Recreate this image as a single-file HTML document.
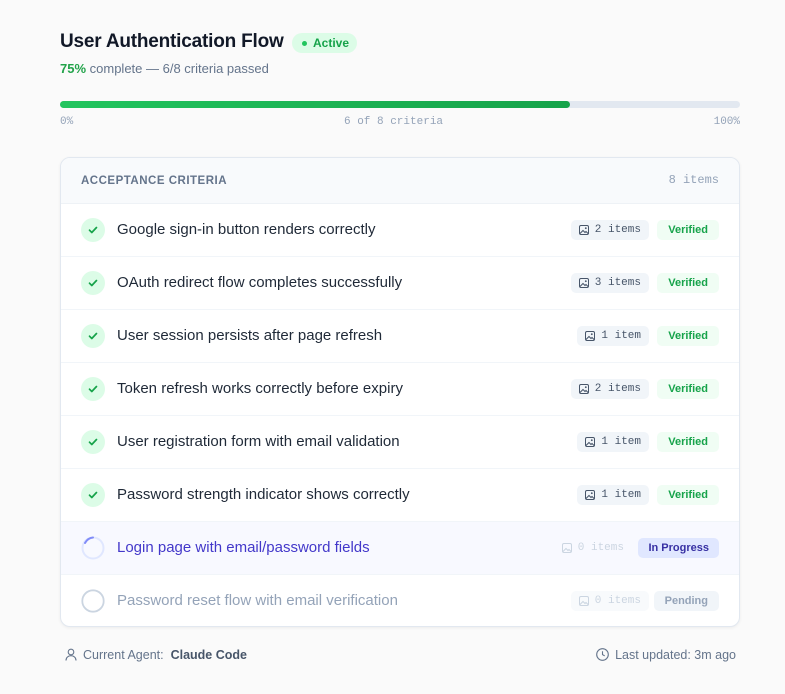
<!DOCTYPE html>
<html><head><meta charset="utf-8"><style>
*{box-sizing:border-box;margin:0;padding:0}
body{width:785px;height:694px;background:#fafafa;font-family:"Liberation Sans",sans-serif;position:relative;overflow:hidden}
.mono{font-family:"Liberation Mono",monospace}
h1{position:absolute;left:60px;top:31px;font-size:19px;font-weight:700;color:#111827;letter-spacing:-0.2px}
.active{position:absolute;left:292px;top:33px;height:20px;width:65px;border-radius:10px;background:#dcfce7;color:#16a34a;font-size:12px;font-weight:700;line-height:20px;padding-left:21px}
.active:before{content:"";position:absolute;left:10px;top:7.5px;width:5px;height:5px;border-radius:50%;background:#22c55e}
.sub{position:absolute;left:60px;top:61px;font-size:13px;color:#64748b}
.sub b{color:#22a34a}
.bar{position:absolute;left:60px;top:101px;width:680px;height:7px;border-radius:4px;background:#e2e8f0}
.bar div{width:510px;height:7px;border-radius:4px;background:linear-gradient(90deg,#22c55e,#16a34a)}
.lbl{position:absolute;top:116px;font-size:11px;color:#94a3b8}
.card{position:absolute;left:60px;top:157px;width:680px;height:470px;background:#fff;border:1px solid #e2e8f0;border-radius:10px;overflow:hidden;box-shadow:0 1px 3px rgba(0,0,0,.06)}
.hd{height:46px;background:#f8fafc;border-bottom:1px solid #eef2f6;position:relative}
.hd span{position:absolute;left:20px;top:17px;font-size:11.5px;font-weight:700;color:#64748b;letter-spacing:.5px}
.hd i{position:absolute;right:20px;top:15px;font-style:normal;font-size:12px;color:#94a3b8}
.row{height:53px;border-bottom:1px solid #f1f5f9;position:relative}
.row:last-child{border-bottom:none}
.ic{position:absolute;left:20px;top:14px;width:24px;height:24px;border-radius:50%;background:#dcfce7}
.ic svg{position:absolute;left:6px;top:6px}
.t{position:absolute;left:56px;top:17px;font-size:15px;color:#1f2937}
.st{position:absolute;right:20px;top:16px;height:20px;border-radius:5px;font-size:11px;font-weight:700;line-height:20px;padding:0 11px;background:#f0fdf4;color:#16a34a}
.it{position:absolute;top:16px;height:20px;border-radius:5px;background:#f1f5f9;color:#475569;font-size:11px;line-height:20px;padding:0 8px 0 24px}
.it svg{position:absolute;left:8px;top:5px}
.ft{position:absolute;top:648px;font-size:12.5px;color:#64748b}
</style></head><body>
<h1>User Authentication Flow</h1>
<div class="active">Active</div>
<div class="sub"><b>75%</b> complete — 6/8 criteria passed</div>
<div class="bar"><div></div></div>
<div class="lbl mono" style="left:60px">0%</div>
<div class="lbl mono" style="left:344px">6 of 8 criteria</div>
<div class="lbl mono" style="right:45px">100%</div>
<div class="card">
<div class="hd"><span>ACCEPTANCE CRITERIA</span><i class="mono">8 items</i></div>
<div class="row"><div class="ic"><svg width="12" height="12" viewBox="0 0 12 12"><path d="M2.5 6.2l2.3 2.3 4.7-5" fill="none" stroke="#16a34a" stroke-width="1.7" stroke-linecap="round" stroke-linejoin="round"/></svg></div><div class="t">Google sign-in button renders correctly</div><div class="it mono" style="right:90px"><svg width="10" height="10" viewBox="0 0 10 10"><rect x=".5" y=".5" width="9" height="9" rx="1.5" fill="none" stroke="currentColor"/><path d="M1 8.5l3-3 2 2 1-1 2 2" fill="none" stroke="currentColor"/><circle cx="6.8" cy="3.2" r=".9" fill="currentColor"/></svg>2 items</div><div class="st">Verified</div></div>
<div class="row"><div class="ic"><svg width="12" height="12" viewBox="0 0 12 12"><path d="M2.5 6.2l2.3 2.3 4.7-5" fill="none" stroke="#16a34a" stroke-width="1.7" stroke-linecap="round" stroke-linejoin="round"/></svg></div><div class="t">OAuth redirect flow completes successfully</div><div class="it mono" style="right:90px"><svg width="10" height="10" viewBox="0 0 10 10"><rect x=".5" y=".5" width="9" height="9" rx="1.5" fill="none" stroke="currentColor"/><path d="M1 8.5l3-3 2 2 1-1 2 2" fill="none" stroke="currentColor"/><circle cx="6.8" cy="3.2" r=".9" fill="currentColor"/></svg>3 items</div><div class="st">Verified</div></div>
<div class="row"><div class="ic"><svg width="12" height="12" viewBox="0 0 12 12"><path d="M2.5 6.2l2.3 2.3 4.7-5" fill="none" stroke="#16a34a" stroke-width="1.7" stroke-linecap="round" stroke-linejoin="round"/></svg></div><div class="t">User session persists after page refresh</div><div class="it mono" style="right:90px"><svg width="10" height="10" viewBox="0 0 10 10"><rect x=".5" y=".5" width="9" height="9" rx="1.5" fill="none" stroke="currentColor"/><path d="M1 8.5l3-3 2 2 1-1 2 2" fill="none" stroke="currentColor"/><circle cx="6.8" cy="3.2" r=".9" fill="currentColor"/></svg>1 item</div><div class="st">Verified</div></div>
<div class="row"><div class="ic"><svg width="12" height="12" viewBox="0 0 12 12"><path d="M2.5 6.2l2.3 2.3 4.7-5" fill="none" stroke="#16a34a" stroke-width="1.7" stroke-linecap="round" stroke-linejoin="round"/></svg></div><div class="t">Token refresh works correctly before expiry</div><div class="it mono" style="right:90px"><svg width="10" height="10" viewBox="0 0 10 10"><rect x=".5" y=".5" width="9" height="9" rx="1.5" fill="none" stroke="currentColor"/><path d="M1 8.5l3-3 2 2 1-1 2 2" fill="none" stroke="currentColor"/><circle cx="6.8" cy="3.2" r=".9" fill="currentColor"/></svg>2 items</div><div class="st">Verified</div></div>
<div class="row"><div class="ic"><svg width="12" height="12" viewBox="0 0 12 12"><path d="M2.5 6.2l2.3 2.3 4.7-5" fill="none" stroke="#16a34a" stroke-width="1.7" stroke-linecap="round" stroke-linejoin="round"/></svg></div><div class="t">User registration form with email validation</div><div class="it mono" style="right:90px"><svg width="10" height="10" viewBox="0 0 10 10"><rect x=".5" y=".5" width="9" height="9" rx="1.5" fill="none" stroke="currentColor"/><path d="M1 8.5l3-3 2 2 1-1 2 2" fill="none" stroke="currentColor"/><circle cx="6.8" cy="3.2" r=".9" fill="currentColor"/></svg>1 item</div><div class="st">Verified</div></div>
<div class="row"><div class="ic"><svg width="12" height="12" viewBox="0 0 12 12"><path d="M2.5 6.2l2.3 2.3 4.7-5" fill="none" stroke="#16a34a" stroke-width="1.7" stroke-linecap="round" stroke-linejoin="round"/></svg></div><div class="t">Password strength indicator shows correctly</div><div class="it mono" style="right:90px"><svg width="10" height="10" viewBox="0 0 10 10"><rect x=".5" y=".5" width="9" height="9" rx="1.5" fill="none" stroke="currentColor"/><path d="M1 8.5l3-3 2 2 1-1 2 2" fill="none" stroke="currentColor"/><circle cx="6.8" cy="3.2" r=".9" fill="currentColor"/></svg>1 item</div><div class="st">Verified</div></div>
<div class="row" style="background:#f8f9ff"><div class="ic" style="background:none"><svg style="left:0;top:0" width="24" height="24" viewBox="0 0 24 24"><circle cx="12" cy="12" r="10.5" fill="none" stroke="#e0e7ff" stroke-width="2"/><path d="M4 7A10.5 10.5 0 0 1 12 1.5" fill="none" stroke="#818cf8" stroke-width="2" stroke-linecap="round"/></svg></div><div class="t" style="color:#4338ca">Login page with email/password fields</div><div class="it mono" style="right:107px;background:none;color:#cbd5e1"><svg width="10" height="10" viewBox="0 0 10 10"><rect x=".5" y=".5" width="9" height="9" rx="1.5" fill="none" stroke="currentColor"/><path d="M1 8.5l3-3 2 2 1-1 2 2" fill="none" stroke="currentColor"/></svg>0 items</div><div class="st" style="background:#e0e7ff;color:#3730a3;padding:0 10px">In Progress</div></div>
<div class="row"><div class="ic" style="background:none"><svg style="left:0;top:0" width="24" height="24" viewBox="0 0 24 24"><circle cx="12" cy="12" r="10.7" fill="none" stroke="#cbd5e1" stroke-width="1.8"/></svg></div><div class="t" style="color:#94a3b8">Password reset flow with email verification</div><div class="it mono" style="right:90px;background:#f8fafc;color:#cbd5e1"><svg width="10" height="10" viewBox="0 0 10 10"><rect x=".5" y=".5" width="9" height="9" rx="1.5" fill="none" stroke="currentColor"/><path d="M1 8.5l3-3 2 2 1-1 2 2" fill="none" stroke="currentColor"/></svg>0 items</div><div class="st" style="background:#f1f5f9;color:#94a3b8">Pending</div></div>
</div>
<div class="ft" style="left:65px"><svg width="12" height="13" viewBox="0 0 12 13" style="vertical-align:-2px;margin-right:6px"><circle cx="6" cy="4" r="2.8" fill="none" stroke="#64748b" stroke-width="1.1"/><path d="M1 12.5c0-3 2.2-4.8 5-4.8s5 1.8 5 4.8" fill="none" stroke="#64748b" stroke-width="1.1"/></svg>Current Agent: &nbsp;<b style="color:#475569">Claude Code</b></div>
<div class="ft" style="right:49px"><svg width="13" height="13" viewBox="0 0 13 13" style="vertical-align:-2px;margin-right:6px"><circle cx="6.5" cy="6.5" r="5.8" fill="none" stroke="#64748b" stroke-width="1.1"/><path d="M6.5 3.2v3.4l2.2 1.3" fill="none" stroke="#64748b" stroke-width="1.1"/></svg>Last updated: 3m ago</div>
</body></html>
